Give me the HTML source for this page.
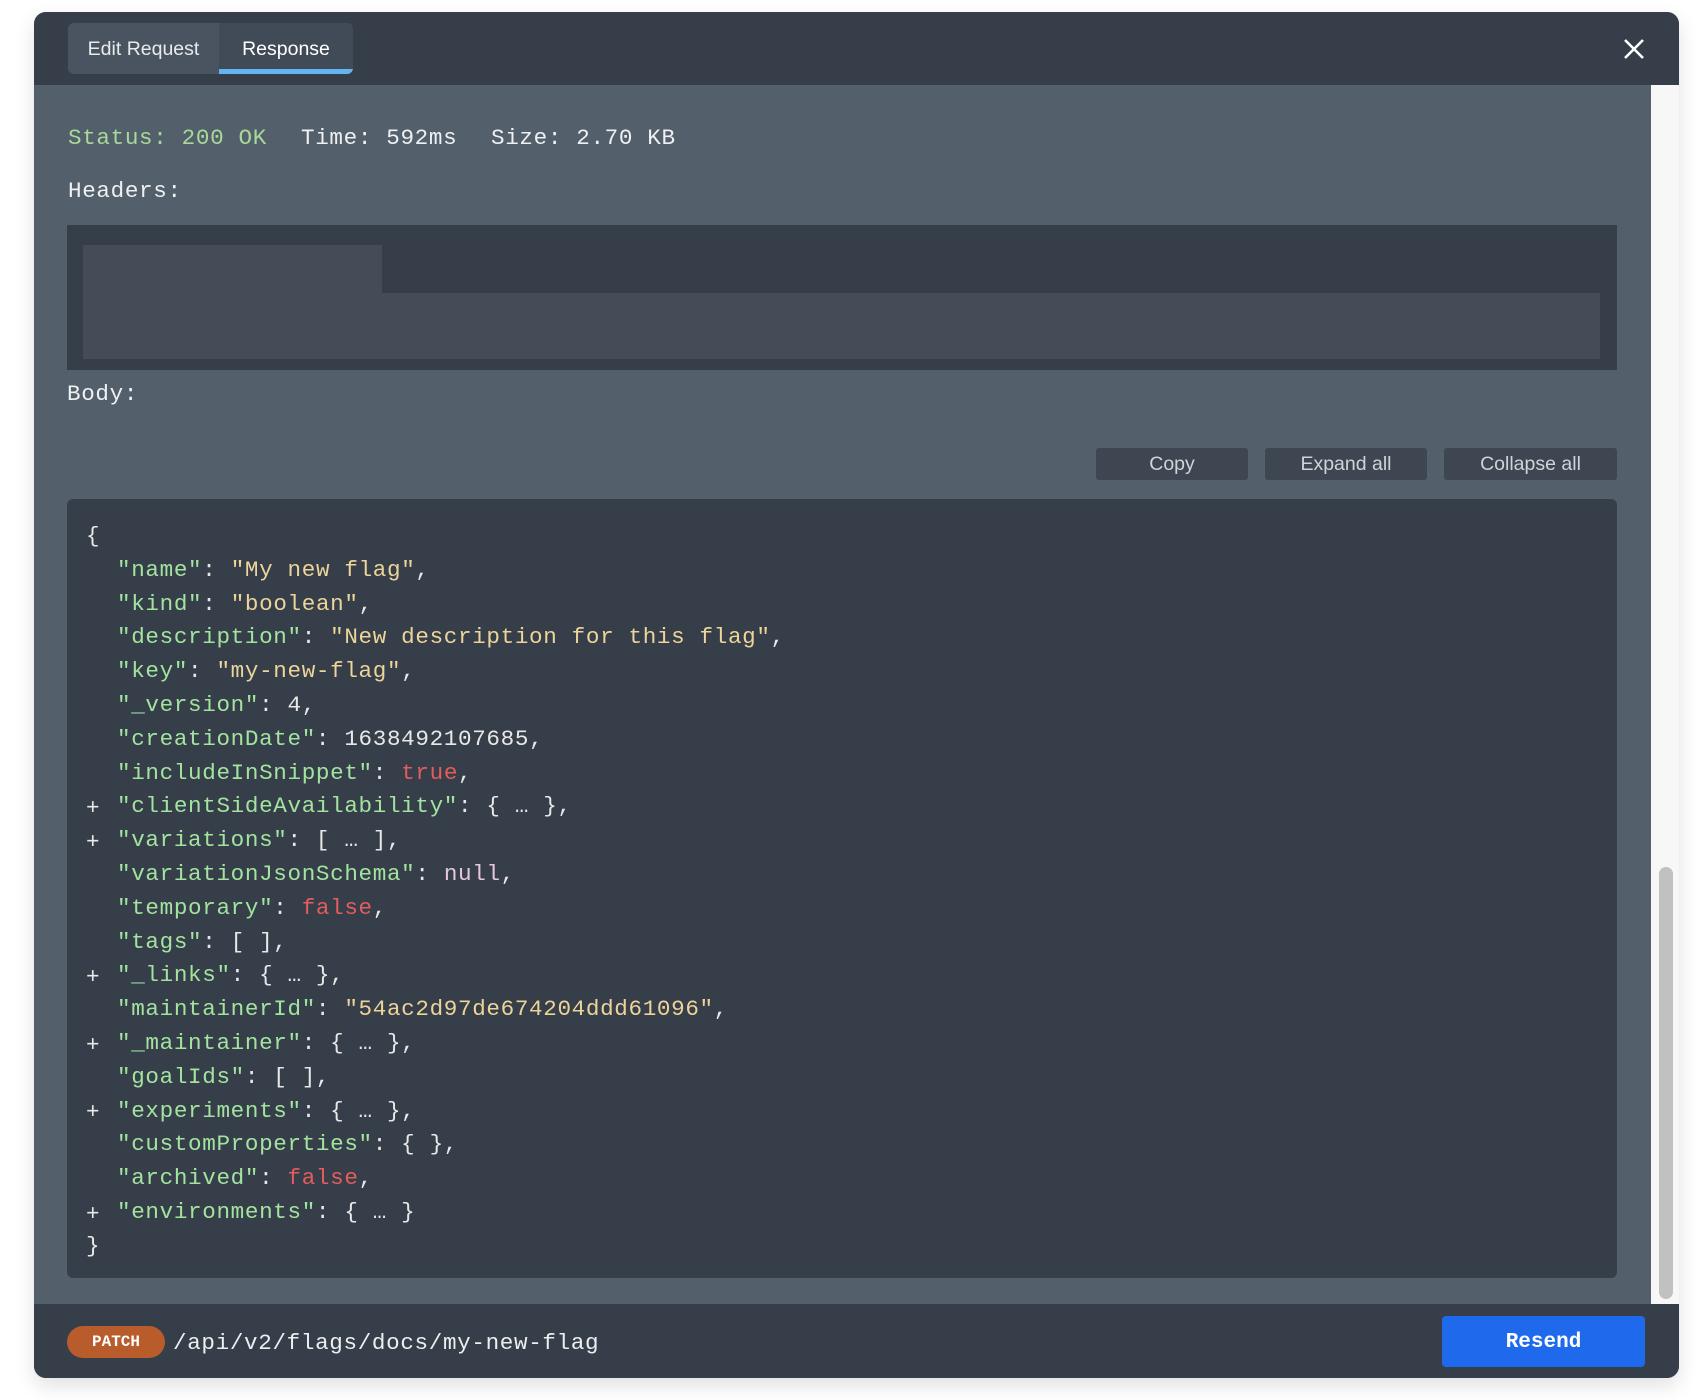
<!DOCTYPE html>
<html><head><meta charset="utf-8"><style>
*{margin:0;padding:0;box-sizing:border-box}
body{width:1700px;height:1400px;background:#fff;position:relative;overflow:hidden;font-family:"Liberation Mono",monospace}
.abs{position:absolute}
#modal{left:34px;top:12px;width:1645px;height:1366px;border-radius:12px;overflow:hidden;background:#535f6b;box-shadow:0 8px 20px rgba(0,0,0,.12)}
.mono{font-family:"Liberation Mono",monospace;font-size:22.6px;letter-spacing:0.65px;white-space:pre}
.sans{font-family:"Liberation Sans",sans-serif}
.k{color:#a3e3a0}.s{color:#ecd49a}.n{color:#e8e8e8}.b{color:#e55c5c}.nl{color:#e6c8dd}.p{color:#e8e8e8}
.btn{background:#3d4651;color:#d0d4d8;font-size:19.5px;text-align:center;line-height:32px;height:32px;border-radius:3px}
.line{position:absolute;left:50px;height:34px;line-height:34px;color:#e8e8e8}
.pl{position:absolute;left:19px;height:34px;line-height:34px;color:#e8e8e8}
</style></head><body>
<div id="modal" class="abs">
  <div class="abs" style="left:0;top:0;width:1645px;height:73px;background:#353e49"></div>
  <div class="abs" style="left:34px;top:11px;width:285px;height:51px;background:#4a5460;border-radius:6px;overflow:hidden">
    <div class="abs sans" style="left:0;top:0;width:151px;height:51px;line-height:52px;text-align:center;color:#e8eaec;font-size:19.5px">Edit Request</div>
    <div class="abs sans" style="left:151px;top:0;width:134px;height:51px;line-height:52px;text-align:center;color:#fff;font-size:19.5px;background:#414b57">Response</div>
    <div class="abs" style="left:151px;top:46px;width:134px;height:5px;background:#62b6f0"></div>
  </div>
  <svg class="abs" style="left:1589px;top:26px" width="22" height="22" viewBox="0 0 22 22"><path d="M2 2L20 20M20 2L2 20" stroke="#fff" stroke-width="2.6"/></svg>
  <div class="abs" style="left:1617px;top:73px;width:28px;height:1231px;background:#f7f7f7"></div>
  <div class="abs" style="left:1625px;top:855px;width:14px;height:432px;background:#c1c1c1;border-radius:7px"></div>

  <div class="abs mono" style="left:34px;top:109px;line-height:34px;color:#a8d89a">Status: 200 OK</div>
  <div class="abs mono" style="left:267px;top:109px;line-height:34px;color:#eef0f2">Time: 592ms</div>
  <div class="abs mono" style="left:457px;top:109px;line-height:34px;color:#eef0f2">Size: 2.70 KB</div>
  <div class="abs mono" style="left:34px;top:162px;line-height:34px;color:#eef0f2">Headers:</div>
  <div class="abs" style="left:33px;top:213px;width:1550px;height:145px;background:#353e49">
    <div class="abs" style="left:16px;top:20px;width:299px;height:48px;background:#434c57"></div>
    <div class="abs" style="left:16px;top:68px;width:1517px;height:66px;background:#434c57"></div>
  </div>
  <div class="abs mono" style="left:33px;top:365px;line-height:34px;color:#eef0f2">Body:</div>
  <div class="abs btn sans" style="left:1062px;top:436px;width:152px">Copy</div>
  <div class="abs btn sans" style="left:1231px;top:436px;width:162px">Expand all</div>
  <div class="abs btn sans" style="left:1410px;top:436px;width:173px">Collapse all</div>

  <div class="abs" style="left:33px;top:487px;width:1550px;height:779px;background:#353e49;border-radius:6px">
    <div class="abs mono" style="left:0;top:20px;width:1500px;height:720px">
<div class="pl" style="top:0">{</div>
<div class="line" style="top:34px"><span class="k">"name"</span>: <span class="s">"My new flag"</span>,</div>
<div class="line" style="top:67.6px"><span class="k">"kind"</span>: <span class="s">"boolean"</span>,</div>
<div class="line" style="top:101.4px"><span class="k">"description"</span>: <span class="s">"New description for this flag"</span>,</div>
<div class="line" style="top:135.2px"><span class="k">"key"</span>: <span class="s">"my-new-flag"</span>,</div>
<div class="line" style="top:169px"><span class="k">"_version"</span>: <span class="n">4</span>,</div>
<div class="line" style="top:202.8px"><span class="k">"creationDate"</span>: <span class="n">1638492107685</span>,</div>
<div class="line" style="top:236.6px"><span class="k">"includeInSnippet"</span>: <span class="b">true</span>,</div>
<div class="pl" style="top:272px">+</div><div class="line" style="top:270.4px"><span class="k">"clientSideAvailability"</span>: { … },</div>
<div class="pl" style="top:306px">+</div><div class="line" style="top:304.2px"><span class="k">"variations"</span>: [ … ],</div>
<div class="line" style="top:338px"><span class="k">"variationJsonSchema"</span>: <span class="nl">null</span>,</div>
<div class="line" style="top:371.8px"><span class="k">"temporary"</span>: <span class="b">false</span>,</div>
<div class="line" style="top:405.6px"><span class="k">"tags"</span>: [ ],</div>
<div class="pl" style="top:441px">+</div><div class="line" style="top:439.4px"><span class="k">"_links"</span>: { … },</div>
<div class="line" style="top:473.2px"><span class="k">"maintainerId"</span>: <span class="s">"54ac2d97de674204ddd61096"</span>,</div>
<div class="pl" style="top:509px">+</div><div class="line" style="top:507px"><span class="k">"_maintainer"</span>: { … },</div>
<div class="line" style="top:540.8px"><span class="k">"goalIds"</span>: [ ],</div>
<div class="pl" style="top:576px">+</div><div class="line" style="top:574.6px"><span class="k">"experiments"</span>: { … },</div>
<div class="line" style="top:608.4px"><span class="k">"customProperties"</span>: { },</div>
<div class="line" style="top:642.2px"><span class="k">"archived"</span>: <span class="b">false</span>,</div>
<div class="pl" style="top:678px">+</div><div class="line" style="top:676px"><span class="k">"environments"</span>: { … }</div>
<div class="pl" style="top:709.8px">}</div>
    </div>
  </div>

  <div class="abs" style="left:0;top:1292px;width:1645px;height:74px;background:#353e49">
    <div class="abs" style="left:33px;top:22px;width:98px;height:32px;background:#b85c2c;border-radius:16px;color:#fff;font-weight:bold;font-size:16px;line-height:32px;text-align:center;font-family:'Liberation Mono',monospace">PATCH</div>
    <div class="abs mono" style="left:139px;top:22px;line-height:34px;color:#eceef0">/api/v2/flags/docs/my-new-flag</div>
    <div class="abs" style="left:1408px;top:12px;width:203px;height:51px;background:#1f6aec;border-radius:4px;color:#fff;font-weight:bold;font-size:21px;line-height:53px;text-align:center;font-family:'Liberation Mono',monospace">Resend</div>
  </div>
</div>
</body></html>
